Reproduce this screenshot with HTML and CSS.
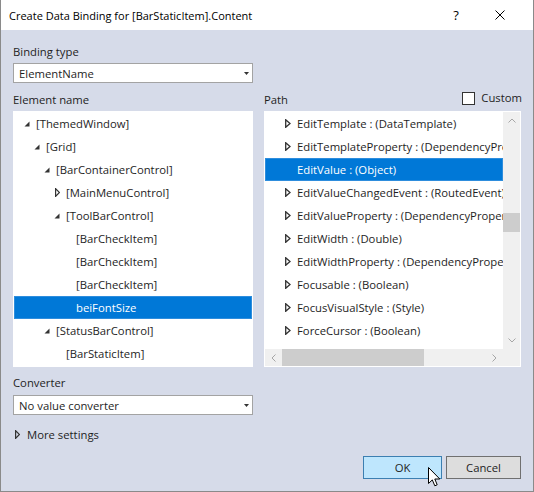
FILE: index.html
```
<!DOCTYPE html>
<html>
<head>
<meta charset="utf-8">
<link rel="stylesheet" href="styles.css">
</head>
<body>
<div class="window">
  <div class="titlebar">
    <span class="title">Create Data Binding for [BarStaticItem].Content</span>
    <span class="help">?</span>
    <span class="close"><svg width="10" height="10" viewBox="0 0 10 10"><path d="M0.5 0.5L9.5 9.5M9.5 0.5L0.5 9.5" stroke="#000" stroke-width="1" fill="none"/></svg></span>
  </div>
  <div class="content">
    <div class="label">Binding type</div>
    <div class="combo"><span>ElementName</span><svg class="drop" width="5" height="3" viewBox="0 0 5 3"><polygon points="0,0 5,0 2.5,3" fill="#333"/></svg></div>

    <div class="columns">
      <div class="col col-left">
        <div class="col-head"><span>Element name</span></div>
        <div class="list tree">
          <div class="row l0"><span class="arr"><svg width="6" height="6" viewBox="0 0 6 6"><polygon points="5.5,0.5 5.5,5.5 0.5,5.5" fill="#333"/></svg></span>[ThemedWindow]</div>
          <div class="row l1"><span class="arr"><svg width="6" height="6" viewBox="0 0 6 6"><polygon points="5.5,0.5 5.5,5.5 0.5,5.5" fill="#333"/></svg></span>[Grid]</div>
          <div class="row l2"><span class="arr"><svg width="6" height="6" viewBox="0 0 6 6"><polygon points="5.5,0.5 5.5,5.5 0.5,5.5" fill="#333"/></svg></span>[BarContainerControl]</div>
          <div class="row l3"><span class="arr"><svg class="col-tri" width="5" height="9" viewBox="0 0 5 9"><polygon points="0.6,0.6 4.4,4.5 0.6,8.4" fill="none" stroke="#333" stroke-width="1.2"/></svg></span>[MainMenuControl]</div>
          <div class="row l3"><span class="arr"><svg width="6" height="6" viewBox="0 0 6 6"><polygon points="5.5,0.5 5.5,5.5 0.5,5.5" fill="#333"/></svg></span>[ToolBarControl]</div>
          <div class="row l4"><span class="arr"></span>[BarCheckItem]</div>
          <div class="row l4"><span class="arr"></span>[BarCheckItem]</div>
          <div class="row l4"><span class="arr"></span>[BarCheckItem]</div>
          <div class="row l4 sel"><span class="arr"></span>beiFontSize</div>
          <div class="row l2"><span class="arr"><svg width="6" height="6" viewBox="0 0 6 6"><polygon points="5.5,0.5 5.5,5.5 0.5,5.5" fill="#333"/></svg></span>[StatusBarControl]</div>
          <div class="row l3"><span class="arr"></span>[BarStaticItem]</div>
        </div>
      </div>
      <div class="col col-right">
        <div class="col-head head-right">
          <span>Path</span>
          <span class="custom"><span class="check"></span><span>Custom</span></span>
        </div>
        <div class="list pathbox">
          <div class="pathlist">
            <div class="row prow"><span class="arr"><svg width="6" height="9" viewBox="0 0 6 9"><polygon points="0.7,0.7 5,4.5 0.7,8.3" fill="none" stroke="#333" stroke-width="1.3"/></svg></span>EditTemplate : (DataTemplate)</div>
            <div class="row prow"><span class="arr"><svg width="6" height="9" viewBox="0 0 6 9"><polygon points="0.7,0.7 5,4.5 0.7,8.3" fill="none" stroke="#333" stroke-width="1.3"/></svg></span>EditTemplateProperty : (DependencyProperty)</div>
            <div class="row prow sel"><span class="arr"></span>EditValue : (Object)</div>
            <div class="row prow"><span class="arr"><svg width="6" height="9" viewBox="0 0 6 9"><polygon points="0.7,0.7 5,4.5 0.7,8.3" fill="none" stroke="#333" stroke-width="1.3"/></svg></span>EditValueChangedEvent : (RoutedEvent)</div>
            <div class="row prow"><span class="arr"><svg width="6" height="9" viewBox="0 0 6 9"><polygon points="0.7,0.7 5,4.5 0.7,8.3" fill="none" stroke="#333" stroke-width="1.3"/></svg></span>EditValueProperty : (DependencyProperty)</div>
            <div class="row prow"><span class="arr"><svg width="6" height="9" viewBox="0 0 6 9"><polygon points="0.7,0.7 5,4.5 0.7,8.3" fill="none" stroke="#333" stroke-width="1.3"/></svg></span>EditWidth : (Double)</div>
            <div class="row prow"><span class="arr"><svg width="6" height="9" viewBox="0 0 6 9"><polygon points="0.7,0.7 5,4.5 0.7,8.3" fill="none" stroke="#333" stroke-width="1.3"/></svg></span>EditWidthProperty : (DependencyProperty)</div>
            <div class="row prow"><span class="arr"><svg width="6" height="9" viewBox="0 0 6 9"><polygon points="0.7,0.7 5,4.5 0.7,8.3" fill="none" stroke="#333" stroke-width="1.3"/></svg></span>Focusable : (Boolean)</div>
            <div class="row prow"><span class="arr"><svg width="6" height="9" viewBox="0 0 6 9"><polygon points="0.7,0.7 5,4.5 0.7,8.3" fill="none" stroke="#333" stroke-width="1.3"/></svg></span>FocusVisualStyle : (Style)</div>
            <div class="row prow"><span class="arr"><svg width="6" height="9" viewBox="0 0 6 9"><polygon points="0.7,0.7 5,4.5 0.7,8.3" fill="none" stroke="#333" stroke-width="1.3"/></svg></span>ForceCursor : (Boolean)</div>
            <div class="row prow"><span class="arr"><svg width="6" height="9" viewBox="0 0 6 9"><polygon points="0.7,0.7 5,4.5 0.7,8.3" fill="none" stroke="#333" stroke-width="1.3"/></svg></span>Foreground : (Brush)</div>
          </div>
          <div class="vscroll">
            <div class="sbtn"><svg width="8" height="5" viewBox="0 0 8 5"><polyline points="0.5,4.5 4,1 7.5,4.5" fill="none" stroke="#a6a6a6" stroke-width="1"/></svg></div>
            <div class="vtrack"><div class="vthumb"></div></div>
            <div class="sbtn"><svg width="8" height="5" viewBox="0 0 8 5"><polyline points="0.5,0.5 4,4 7.5,0.5" fill="none" stroke="#a6a6a6" stroke-width="1"/></svg></div>
          </div>
          <div class="hscroll">
            <div class="sbtn"><svg width="5" height="8" viewBox="0 0 5 8"><polyline points="4.5,0.5 1,4 4.5,7.5" fill="none" stroke="#a6a6a6" stroke-width="1"/></svg></div>
            <div class="htrack"><div class="hthumb"></div></div>
            <div class="sbtn"><svg width="5" height="8" viewBox="0 0 5 8"><polyline points="0.5,0.5 4,4 0.5,7.5" fill="none" stroke="#a6a6a6" stroke-width="1"/></svg></div>
          </div>
          <div class="corner"></div>
        </div>
      </div>
    </div>

    <div class="label conv-label">Converter</div>
    <div class="combo conv-combo"><span>No value converter</span><svg class="drop" width="5" height="3" viewBox="0 0 5 3"><polygon points="0,0 5,0 2.5,3" fill="#333"/></svg></div>

    <div class="more"><span class="arr more-arr"><svg width="5" height="9" viewBox="0 0 5 9"><polygon points="0.6,0.6 4.4,4.5 0.6,8.4" fill="none" stroke="#333" stroke-width="1.2"/></svg></span>More settings</div>

    <div class="buttons">
      <div class="btn btn-ok">OK</div>
      <div class="btn btn-cancel">Cancel</div>
    </div>
  </div>
  <svg class="cursor" width="13" height="21" viewBox="0 0 13 21"><path d="M0.5 0.5L0.5 16.5L4.3 12.9L6.8 18.8L9.2 17.8L6.8 12L11.8 12Z" fill="#fff" stroke="#000" stroke-width="1" stroke-linejoin="miter"/></svg>
</div>
</body>
</html>
```
FILE: styles.css
```
* { box-sizing: border-box; }
html, body { margin: 0; padding: 0; }
body {
  width: 534px;
  height: 492px;
  overflow: hidden;
  font-family: "Open Sans", "Noto Sans", sans-serif;
  font-size: 11.3px;
  color: #1e1e1e;
  background: #d6dbe9;
}
.window {
  position: relative;
  width: 534px;
  height: 492px;
  border: 1px solid #8a8a8a;
  border-top: none;
  background: #d6dbe9;
  display: flex;
  flex-direction: column;
}
.titlebar {
  height: 30px;
  flex: none;
  background: #fff;
  display: flex;
  align-items: center;
  padding: 0 23px 0 8px;
  color: #000;
  font-size: 11px;
}
.title { flex: 1; }
.help {
  width: 20px;
  text-align: center;
  margin-right: 24px;
  margin-left: -3px;
  font-size: 13px;
}
.close {
  width: 20px;
  height: 10px;
  display: flex;
  justify-content: center;
}
.close svg { display: block; }
.content {
  flex: 1;
  padding: 14px 12px 0 12px;
  display: flex;
  flex-direction: column;
}
.label { height: 16px; line-height: 16px; white-space: nowrap; }
.combo {
  margin-top: 3px;
  width: 240px;
  height: 20px;
  background: #fff;
  border: 1px solid #a3a3a3;
  display: flex;
  align-items: center;
  justify-content: space-between;
  padding: 0 3px 0 5px;
}
.drop { display: block; }
.columns {
  margin-top: 9px;
  display: flex;
  gap: 11px;
}
.col-left { width: 240px; }
.col-right { width: 257px; }
.col-head {
  height: 16px;
  line-height: 16px;
  display: flex;
  align-items: center;
}
.head-right { justify-content: space-between; }
.custom {
  display: flex;
  align-items: center;
  gap: 6px;
  margin-top: -4px;
  margin-right: -1px;
}
.check {
  width: 13px;
  height: 13px;
  background: #fff;
  border: 1px solid #333;
}
.list {
  margin-top: 3px;
  height: 256px;
  background: #fff;
  padding: 1px;
  overflow: hidden;
}
.row {
  height: 23px;
  display: flex;
  align-items: center;
  white-space: nowrap;
}
.row.sel {
  background: #0078d7;
  color: #fff;
  box-shadow: inset 0 0 0 1px #2e8ddd;
}
.arr {
  width: 12px;
  flex: none;
  display: flex;
  align-items: center;
}
.arr svg { display: block; }
.tree .row .arr svg { margin-top: 1px; }
.tree .row .arr .col-tri { margin-left: 1px; margin-top: 0; }
.l0 { padding-left: 10px; }
.l1 { padding-left: 20px; }
.l2 { padding-left: 30px; }
.l3 { padding-left: 40px; }
.l4 { padding-left: 50px; }
.pathbox {
  display: grid;
  grid-template-columns: 1fr 17px;
  grid-template-rows: 1fr 17px;
}
.pathlist {
  overflow: hidden;
  min-width: 0;
}
.prow { padding-left: 20px; }
.vscroll {
  background: #f0f0f0;
  display: flex;
  flex-direction: column;
}
.sbtn {
  width: 17px;
  height: 17px;
  flex: none;
  display: flex;
  align-items: center;
  justify-content: center;
}
.sbtn svg { display: block; }
.vtrack { flex: 1; }
.vthumb {
  margin-top: 84px;
  height: 19px;
  background: #cdcdcd;
}
.hscroll {
  background: #f0f0f0;
  display: flex;
}
.htrack { flex: 1; }
.hthumb {
  width: 142px;
  height: 17px;
  background: #cdcdcd;
}
.corner { background: #f0f0f0; }
.conv-label { margin-top: 8px; }
.conv-combo { margin-top: 4px; }
.more {
  margin-top: 11px;
  height: 16px;
  display: flex;
  align-items: center;
  white-space: nowrap;
}
.more-arr { margin-left: 2px; }
.buttons {
  margin-top: 14px;
  display: flex;
  justify-content: flex-end;
  gap: 4px;
}
.btn {
  height: 23px;
  display: flex;
  align-items: center;
  justify-content: center;
  color: #1e1e1e;
}
.btn-ok {
  width: 79px;
  background: #bee6fd;
  border: 1px solid #3c7fb1;
}
.btn-cancel {
  width: 75px;
  background: #dddddd;
  border: 1px solid #707070;
}
.cursor {
  position: absolute;
  left: 427px;
  top: 467px;
}
```
